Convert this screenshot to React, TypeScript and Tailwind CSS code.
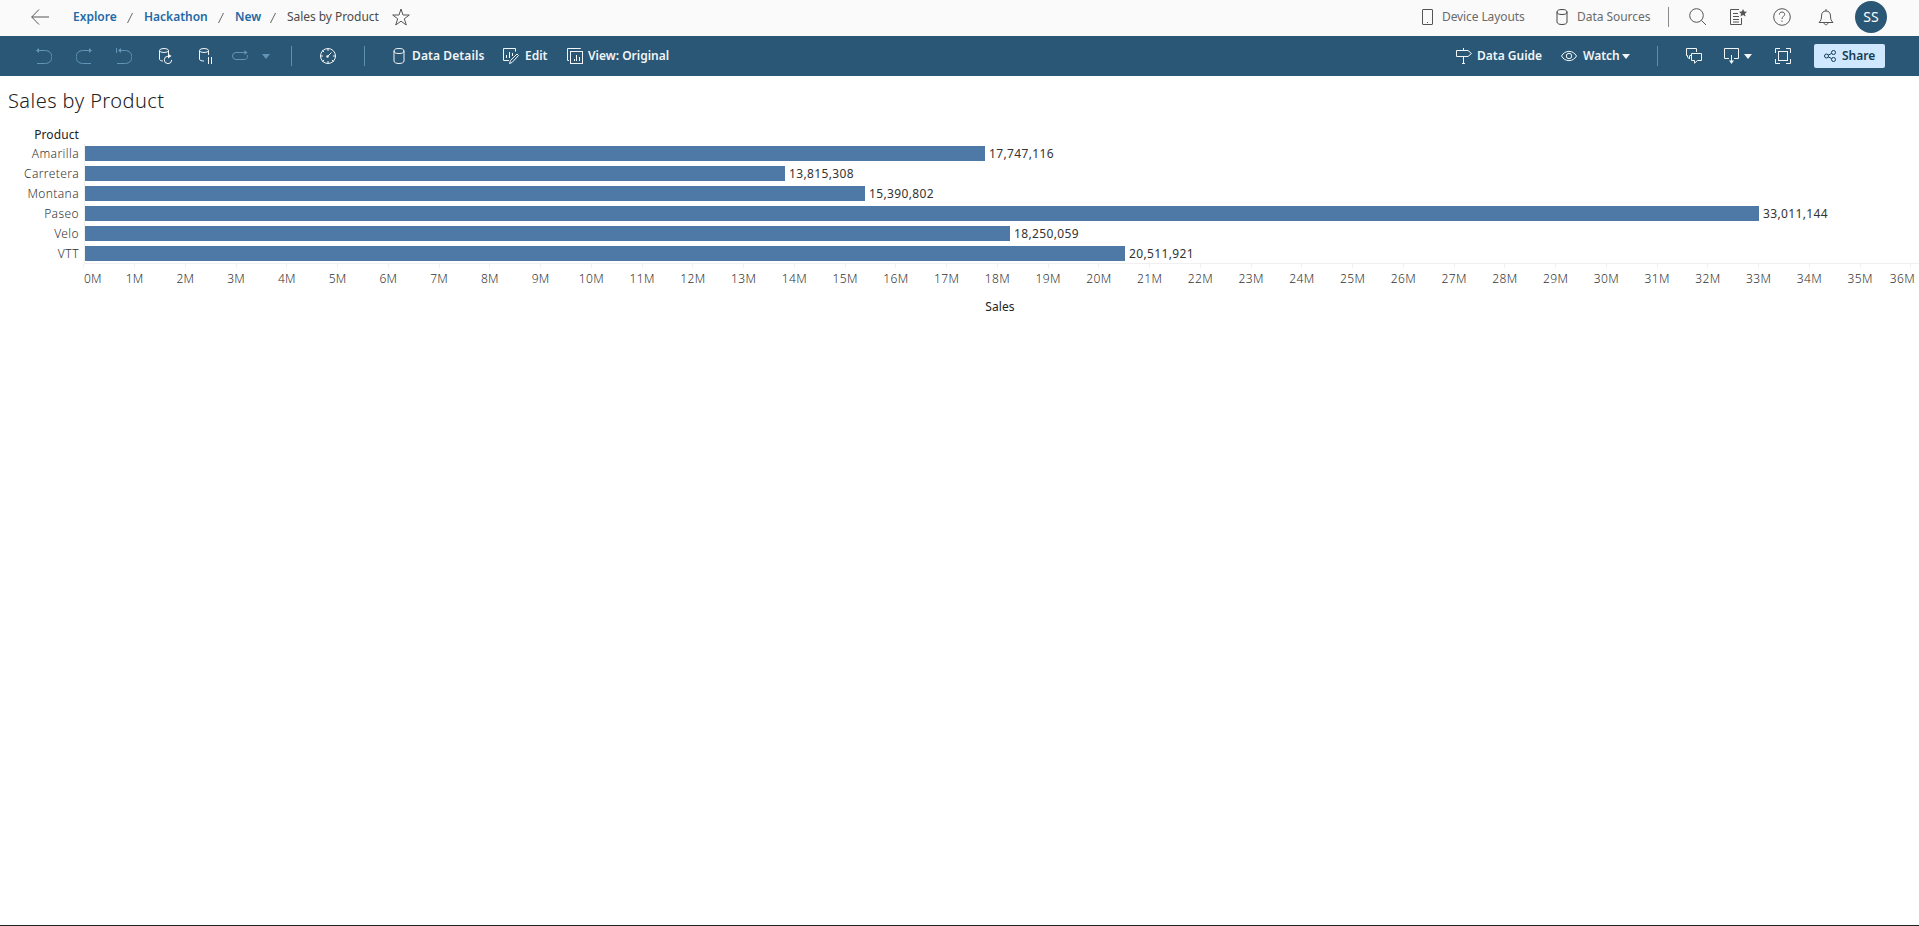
import type { ReactNode } from "react";

const PX_PER_MILLION = 50.75;

const PRODUCTS = [
  { name: "Amarilla", sales: 17747116 },
  { name: "Carretera", sales: 13815308 },
  { name: "Montana", sales: 15390802 },
  { name: "Paseo", sales: 33011144 },
  { name: "Velo", sales: 18250059 },
  { name: "VTT", sales: 20511921 },
];

function Icon({ className = "", children }: { className?: string; children: ReactNode }) {
  return (
    <svg
      width="16"
      height="16"
      viewBox="0 0 16 16"
      fill="none"
      stroke="currentColor"
      strokeWidth="1"
      className={`shrink-0 ${className}`}
    >
      {children}
    </svg>
  );
}

function Cylinder() {
  return (
    <>
      <ellipse cx="8" cy="3" rx="5" ry="2.5" />
      <path d="M3 3v10c0 1.5 2 2.5 5 2.5s5-1 5-2.5V3" />
    </>
  );
}

function Caret({ className }: { className: string }) {
  return (
    <svg width="8" height="5" viewBox="0 0 8 5" fill="currentColor" className={`shrink-0 ${className}`}>
      <path d="M0 0h8L4 5z" />
    </svg>
  );
}

function Crumb({ label, className }: { label: string; className: string }) {
  return (
    <>
      <a className={`shrink-0 font-semibold text-[#1f69a6] ${className}`}>{label}</a>
      <svg width="6" height="10" viewBox="0 0 6 10" stroke="#666" className="mx-[10px] mt-px shrink-0">
        <path d="M5.5 0L.5 10" />
      </svg>
    </>
  );
}

function Header() {
  return (
    <header className="flex h-9 items-center bg-[#fafafa] pb-[2px] text-xs whitespace-nowrap text-[#4b4b4b]">
      <svg width="18" height="16" viewBox="0 0 18 16" fill="none" stroke="#555" className="mr-[24px] ml-[31px] shrink-0">
        <path d="M8 .5L.7 8 8 15.5M.7 8H18" />
      </svg>
      <Crumb label="Explore" className="w-[44px]" />
      <Crumb label="Hackathon" className="ml-px w-[64px]" />
      <Crumb label="New" className="ml-px w-[25px]" />
      <span className="ml-px w-[92px] shrink-0 tracking-[-0.05px]">Sales by Product</span>
      <svg width="18" height="18" viewBox="0 0 18 18" fill="none" stroke="#555" className="ml-[13px] shrink-0">
        <path d="M9 1l2 6h6.3l-5 3.8 2 6.2L9 13.2 3.7 17l2-6.2-5-3.8H7z" />
      </svg>

      <div className="ml-auto flex shrink-0 items-center text-[#6b6b6b]">
        <Icon className="text-[#555]">
          <rect x="2.5" y=".5" width="10" height="15" rx=".5" />
          <path d="M7 13.5h1" />
        </Icon>
        <span className="ml-[6px] w-[83px] tracking-[-0.1px]">Device Layouts</span>
        <Icon className="ml-[29px] text-[#444]">
          <Cylinder />
        </Icon>
        <span className="ml-[7px] w-[74px] tracking-[-0.05px]">Data Sources</span>
        <span className="ml-[17px] h-5 w-px bg-[#8a8a8a]" />
        <svg width="18" height="18" viewBox="0 0 18 18" fill="none" stroke="#555" className="ml-5">
          <circle cx="7.5" cy="7.5" r="6.8" />
          <path d="M12.3 12.3L17 17" />
        </svg>
        <svg width="17" height="16" viewBox="0 0 17 16" fill="none" stroke="#555" className="ml-[23px]">
          <path d="M9 .5H.5v15h11V9M3 4.5h5M3 7.5h6M3 10.5h6M3 13h6" />
          <path
            d="M13 0l1.2 2.5 2.8.3-2.1 1.9.7 2.8L13 6.1l-2.6 1.4.7-2.8L9 2.8l2.8-.3z"
            fill="#555"
            stroke="none"
          />
        </svg>
        <svg width="18" height="18" viewBox="0 0 18 18" fill="none" stroke="#555" className="ml-[26px]">
          <circle cx="9" cy="9" r="8.3" />
          <path d="M6.4 6.6C6.5 4.8 7.5 4 9 4s2.6.9 2.6 2.4C11.6 8.3 9 8.4 9 11M9 12.5v1.3" />
        </svg>
        <svg width="16" height="17" viewBox="0 0 16 17" fill="none" stroke="#555" className="ml-[27px]">
          <path d="M8 0v2M1 13.5h14M1 13.5c2-2 2.5-3.5 2.5-6.5C3.5 4 5 2 8 2s4.5 2 4.5 5c0 3 .5 4.5 2.5 6.5M6 13.5c0 3 4 3 4 0" />
        </svg>
        <span className="mr-8 ml-[21px] flex size-8 items-center justify-center rounded-full bg-[#2a5775] text-sm text-white">
          SS
        </span>
      </div>
    </header>
  );
}

function Toolbar() {
  return (
    <div className="flex h-10 items-center bg-[#2a5775] text-xs font-semibold whitespace-nowrap text-[#f2f5f7]">
      <div className="flex shrink-0 items-center pl-9 text-[#6095b8]">
        <Icon>
          <path d="M2 2.5h7.5a6.5 6.5 0 0 1 0 13H1" />
          <path d="M0 2.5L3 0v5z" fill="currentColor" stroke="none" />
        </Icon>
        <Icon className="ml-6">
          <path d="M14 2.5H6.5a6.5 6.5 0 0 0 0 13H15" />
          <path d="M16 2.5L13 0v5z" fill="currentColor" stroke="none" />
        </Icon>
        <Icon className="ml-6">
          <path d="M.5 0v5M4 2.5h5.5a6.5 6.5 0 0 1 0 13H1" />
          <path d="M2 2.5L5 0v5z" fill="currentColor" stroke="none" />
        </Icon>
        <Icon className="ml-6 text-[#f2f5f7]">
          <ellipse cx="8" cy="2.5" rx="4.5" ry="2" />
          <path d="M3.5 2.5V11c0 1 1 2 3.5 2M12.5 2.5V6M12 8.2a3.7 3.7 0 1 0 3.7 3.7" />
          <path d="M12 5.5L15.5 8 12 10.5z" fill="currentColor" stroke="none" />
        </Icon>
        <Icon className="ml-6 text-[#f2f5f7]">
          <ellipse cx="8" cy="2.5" rx="4.5" ry="2" />
          <path d="M3.5 2.5V11c0 1.5 2 2 4.5 2M12.5 2.5V7M12.5 9v7M15.5 9v7" />
        </Icon>
        <Icon className="ml-5">
          <path d="M13 4.5H4a3.5 3.5 0 0 0 0 7h8c3 0 4.2-2 3.2-4.5" />
          <path d="M15.5 4.5L12.5 2v5z" fill="currentColor" stroke="none" />
        </Icon>
        <Caret className="ml-[14px]" />
        <span className="ml-[21px] h-5 w-px bg-[#5c8fb0]" />
        <Icon className="ml-7 text-[#f2f5f7]">
          <circle cx="8" cy="8" r="7.5" />
          <path d="M8 0v3M8 13v3M0 8h3M13 8h3M2.3 2.3l1.8 1.8M11.9 11.9l1.8 1.8M2.3 13.7l1.8-1.8M7 9l4.5-4.5" />
          <circle cx="7.5" cy="8.5" r="1.2" fill="currentColor" stroke="none" />
        </Icon>
        <span className="ml-7 h-5 w-px bg-[#5c8fb0]" />
      </div>

      <Icon className="ml-[26px]">
        <Cylinder />
      </Icon>
      <span className="ml-[5px] w-[73px] shrink-0 tracking-[0.1px]">Data Details</span>
      <Icon className="ml-[18px]">
        <path d="M12.5 3.5v-3H.5v12H6M3.5 10V7M6.5 10V4M9.5 8V5" />
        <path d="M6.5 15.5l1-3L14 6l1.5 1.5-6.5 7z" />
      </Icon>
      <span className="ml-[6px] w-[24px] shrink-0">Edit</span>
      <Icon className="ml-[18px]">
        <path d="M13.5 1V.5H.5v12H2" />
        <rect x="3.5" y="3.5" width="12" height="12" />
        <path d="M7.5 13v-2M9.5 13V7M12.5 13V9" />
      </Icon>
      <span className="ml-[5px] w-[82px] shrink-0">View: Original</span>

      <div className="ml-auto flex shrink-0 items-center">
        <Icon>
          <path d="M.5 2.5H12l3.5 3-3.5 3H.5zM7.500 0v2.5M7.5 8.5V16M6 15.5h3" />
        </Icon>
        <span className="ml-[5px] w-[66px]">Data Guide</span>
        <Icon className="ml-[18px]">
          <path d="M.5 8C4 1.800 12 1.800 15.5 8 12 14.2 4 14.2.5 8z" />
          <circle cx="8" cy="8" r="2.7" />
        </Icon>
        <span className="ml-[6px] w-[37px]">Watch</span>
        <Caret className="ml-[2px]" />
        <span className="ml-[27px] h-5 w-px bg-[#5c8fb0]" />
        <Icon className="ml-7">
          <path d="M3.5 8v3l-2-2V7.5h-1v-7h10V4M5 7.5H3.5" />
          <path d="M5.5 5.5h10v7h-4l-3 2.7v-2.7h-3z" />
        </Icon>
        <Icon className="ml-[22px]">
          <path d="M5 10.5H.5V.5h14v10H10M7.5 7v7" />
          <path d="M5 12.5h5L7.5 16z" fill="currentColor" stroke="none" />
        </Icon>
        <Caret className="ml-1" />
        <Icon className="ml-[23px]">
          <path d="M5 .5H.5V5M11 .5h4.5V5M5 15.5H.5V11M11 15.5h4.5V11" />
          <rect x="3.5" y="3.5" width="9" height="9" />
        </Icon>
        <button className="mr-[34px] ml-[23px] flex h-6 w-[71px] items-center rounded-xs bg-[#cfe8ff] pl-[10px] text-xs text-[#143a52]">
          <svg width="12" height="12" viewBox="0 0 12 12" fill="none" stroke="currentColor" className="shrink-0">
            <circle cx="2.5" cy="6" r="2" />
            <circle cx="9.5" cy="2.5" r="2" />
            <circle cx="9.5" cy="9.5" r="2" />
            <path d="M4.4 5l3.2-1.5M4.4 7l3.2 1.5" />
          </svg>
          <span className="ml-[6px]">Share</span>
        </button>
      </div>
    </div>
  );
}

function SalesChart() {
  return (
    <section className="text-xs whitespace-nowrap">
      <div className="mt-[9px] flex h-[19px] w-[79px] items-center justify-end tracking-[0.1px] text-[#222]">
        Product
      </div>
      <div className="flex">
        <div className="w-[84px] shrink-0 pr-[5px] text-right font-light tracking-[0.4px] text-[#333]">
          {PRODUCTS.map((p) => (
            <div key={p.name} className="h-5 leading-5">
              {p.name}
            </div>
          ))}
        </div>
        <div className="h-[120px] grow border-b border-l border-[#f0f0f0]">
          {PRODUCTS.map((p) => (
            <div key={p.name} className="flex h-5">
              <div
                className="mt-[2px] h-[15px] shrink-0 bg-[#4e79a7]"
                style={{ width: Math.round((p.sales / 1e6) * PX_PER_MILLION - 1) }}
              />
              <span className="ml-1 leading-5 tracking-[0.35px] text-[#333]">
                {p.sales.toLocaleString("en-US")}
              </span>
            </div>
          ))}
        </div>
      </div>
      {/* one column per million, centred on its tick */}
      <div className="flex pl-[58.5px] text-[#333]">
        {Array.from({ length: 37 }, (_, m) => (
          <div key={m} className="flex w-[50.75px] shrink-0 flex-col items-center">
            <span className="mb-[3px] h-1 w-px bg-[#f0f0f0]" />
            <span className={`font-light tracking-[0.3px] ${m === 0 ? "ml-[18px]" : m === 36 ? "mr-[17px]" : ""}`}>
              {m}M
            </span>
          </div>
        ))}
      </div>
      <div className="mt-[12px] ml-[81px] text-center tracking-[0.1px] text-[#222]">Sales</div>
    </section>
  );
}

export default function App() {
  return (
    <div className="flex h-[926px] w-[1919px] flex-col overflow-hidden border-b border-[#222] bg-white font-['Noto_Sans',sans-serif]">
      <Header />
      <Toolbar />
      <h1 className="mt-[10px] pl-2 text-xl leading-[30px] font-light tracking-[0.45px] text-[#222]">
        Sales by Product
      </h1>
      <SalesChart />
    </div>
  );
}
